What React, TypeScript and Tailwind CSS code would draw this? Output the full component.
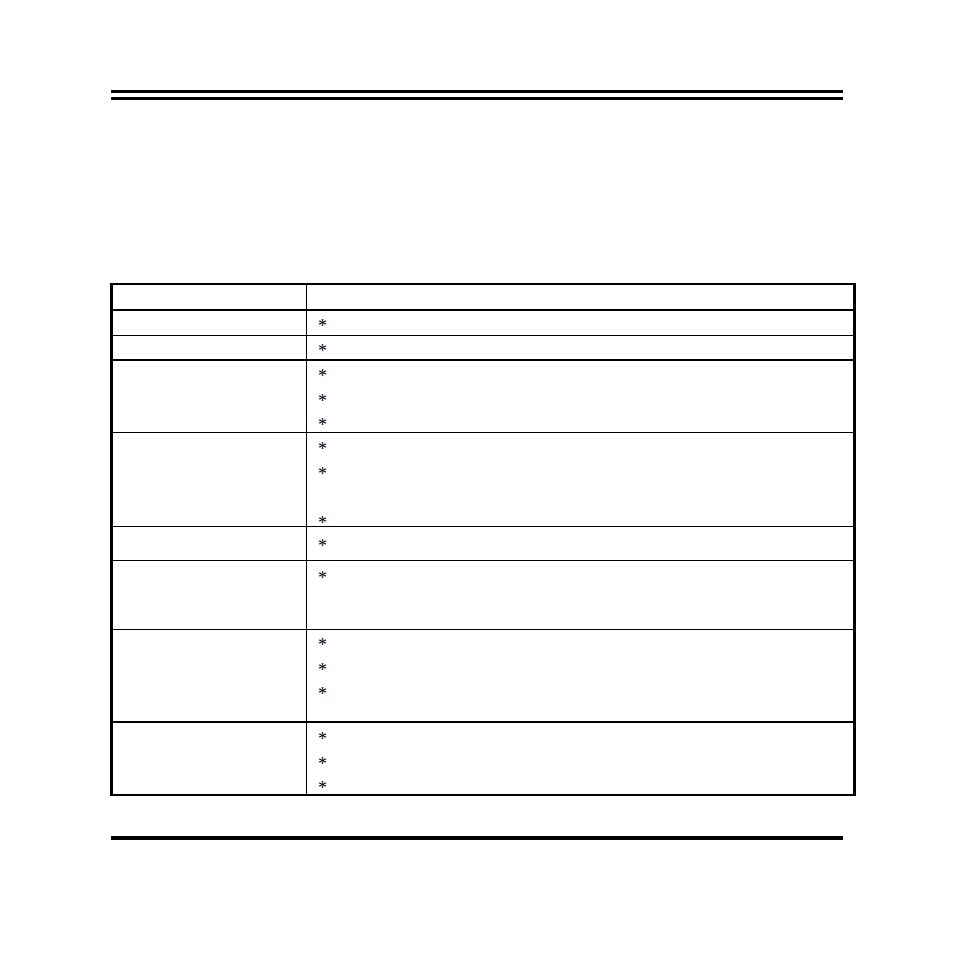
import React from "react";

type Row = { h: string; pt: string; border: string; lines: (string | null)[] };

const rows: Row[] = [
  { h: "h-[25px]", pt: "pt-[7px]", border: "border-b", lines: ["*"] },
  { h: "h-[25px]", pt: "pt-[7px]", border: "border-b-2", lines: ["*"] },
  { h: "h-[72px]", pt: "pt-[7px]", border: "border-b", lines: ["*", "*", "*"] },
  { h: "h-[94px]", pt: "pt-[8px]", border: "border-b", lines: ["*", "*", null, "*"] },
  { h: "h-[34px]", pt: "pt-[11px]", border: "border-b", lines: ["*"] },
  { h: "h-[69px]", pt: "pt-[9px]", border: "border-b", lines: ["*"] },
  { h: "h-[93px]", pt: "pt-[7px]", border: "border-b-2", lines: ["*", "*", "*"] },
  { h: "h-[71px]", pt: "pt-[8px]", border: "", lines: ["*", "*", "*"] },
];

export default function App() {
  return (
    <div
      className="w-[954px] h-[954px] bg-white pt-[90px]"
      style={{ fontFamily: '"Liberation Serif", "Times New Roman", serif' }}
    >
      <div className="ml-[111px] w-[732px]">
        <div className="h-[3px] bg-black" />
        <div className="h-[3px] bg-black mt-[4px]" />
      </div>

      <div className="ml-[110px] w-[746px] mt-[183px] border-l-[3px] border-r-[3px] border-t-2 border-b-2 border-black">
        <div className="flex h-[26px] border-b-2 border-black">
          <div className="w-[194px] border-r border-black" />
          <div className="flex-1" />
        </div>
        {rows.map((r, i) => (
          <div key={i} className={`flex ${r.h} ${r.border} border-black`}>
            <div className="w-[194px] border-r border-black" />
            <div className={`flex-1 pl-[11px] ${r.pt} flex flex-col gap-[8.5px]`}>
              {r.lines.map((l, j) => (
                <div key={j} className="h-[16px] shrink-0 leading-[16px] text-[18px] text-black">
                  {l ?? ""}
                </div>
              ))}
            </div>
          </div>
        ))}
      </div>

      <div className="ml-[111px] w-[732px] mt-[40px] h-[4px] bg-black" />
    </div>
  );
}
